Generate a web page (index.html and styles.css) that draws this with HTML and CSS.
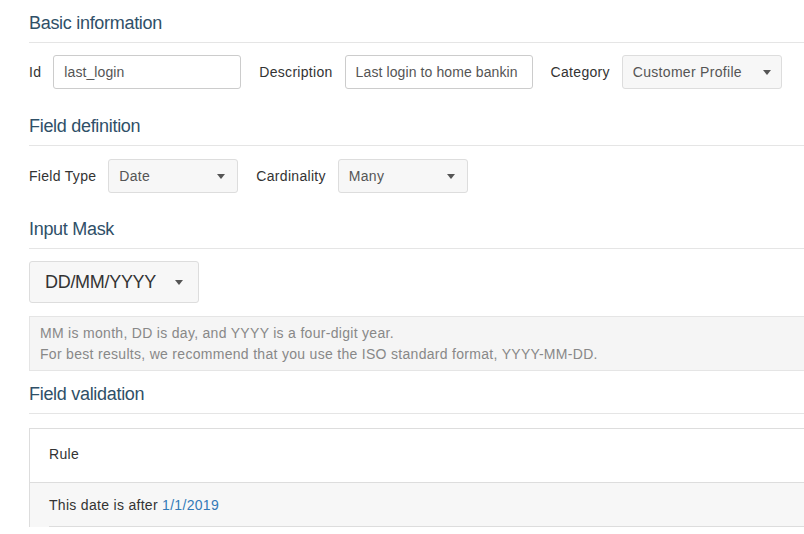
FILE: index.html
```html
<!DOCTYPE html>
<html lang="en">
<head>
    <meta charset="UTF-8">
    <meta name="viewport" content="width=device-width, initial-scale=1.0">
    <title>Field details - last_login</title>
    <link rel="stylesheet" href="styles.css">
</head>
<body>

    <div class="page">

        <h3 class="section-title">Basic information</h3>
        <div class="form-row">
            <div class="field">
                <label>Id</label>
                <div class="text-input id-input">last_login</div>
            </div>
            <div class="field">
                <label>Description</label>
                <div class="text-input desc-input">Last login to home bankin</div>
            </div>
            <div class="field">
                <label>Category</label>
                <div class="dropdown category-dropdown">
                    <span>Customer Profile</span>
                    <span class="caret"></span>
                </div>
            </div>
        </div>

        <h3 class="section-title">Field definition</h3>
        <div class="form-row definition-row">
            <div class="field">
                <label>Field Type</label>
                <div class="dropdown small-dropdown">
                    <span>Date</span>
                    <span class="caret"></span>
                </div>
            </div>
            <div class="field">
                <label>Cardinality</label>
                <div class="dropdown small-dropdown">
                    <span>Many</span>
                    <span class="caret"></span>
                </div>
            </div>
        </div>

        <h3 class="section-title">Input Mask</h3>
        <div class="dropdown mask-dropdown">
            <span>DD/MM/YYYY</span>
            <span class="caret"></span>
        </div>
        <div class="help-box">
            MM is month, DD is day, and YYYY is a four-digit year.<br>
            For best results, we recommend that you use the ISO standard format, YYYY-MM-DD.
        </div>

        <h3 class="section-title">Field validation</h3>
        <div class="rules">
            <div class="rules-head">Rule</div>
            <div class="rules-row">
                <div class="rules-row-inner">This date is after&nbsp;<a href="#">1/1/2019</a></div>
            </div>
        </div>

    </div>

</body>
</html>
```

FILE: styles.css
```css
body {
    margin: 0;
    font-family: "Liberation Sans", Arial, sans-serif;
    font-size: 14px;
    letter-spacing: 0.3px;
    color: #333;
    background-color: #fff;
    overflow: hidden;
}
.page {
    padding: 13px 0 0 29px;
}
.section-title {
    margin: 0 0 12px;
    padding-bottom: 9px;
    font-size: 18px;
    line-height: 20px;
    font-weight: normal;
    letter-spacing: -0.3px;
    color: #2f5068;
    border-bottom: 1px solid #e5e5e5;
}
.form-row {
    display: flex;
    align-items: center;
    gap: 18px;
    margin-bottom: 27px;
}
.definition-row {
    margin-top: 13px;
    margin-bottom: 26px;
}
.field {
    display: flex;
    align-items: center;
}
.field label {
    margin-right: 12px;
}
.text-input {
    box-sizing: border-box;
    height: 34px;
    padding: 0 10px;
    line-height: 32px;
    color: #555;
    letter-spacing: 0.1px;
    border: 1px solid #ccc;
    border-radius: 3px;
    white-space: nowrap;
    overflow: hidden;
}
.id-input {
    width: 188px;
}
.desc-input {
    width: 188px;
}
.dropdown {
    box-sizing: border-box;
    display: flex;
    align-items: center;
    justify-content: space-between;
    height: 34px;
    padding: 0 12px 0 10px;
    color: #555;
    background-color: #f7f7f7;
    border: 1px solid #ddd;
    border-radius: 3px;
}
.category-dropdown {
    width: 160px;
    padding-right: 10px;
}
.small-dropdown {
    width: 130px;
}
.mask-dropdown {
    width: 170px;
    height: 42px;
    padding: 0 15px;
    font-size: 18px;
    letter-spacing: -0.3px;
    color: #333;
}
.caret {
    width: 0;
    height: 0;
    border-top: 5px solid #555;
    border-left: 4.5px solid transparent;
    border-right: 4.5px solid transparent;
}
.help-box {
    margin: 13px 0;
    padding: 6px 10px 5px;
    line-height: 21px;
    color: #888;
    background-color: #f5f5f5;
    border: 1px solid #e5e5e5;
    border-right: none;
}
.rules {
    margin-top: 14px;
    border-top: 1px solid #ddd;
    border-left: 1px solid #ddd;
}
.rules-head {
    display: flex;
    align-items: center;
    height: 54px;
    padding: 0 0 4px 19px;
    box-sizing: border-box;
    border-bottom: 1px solid #ddd;
}
.rules-row {
    padding-left: 19px;
    background-color: #f7f7f7;
}
.rules-row-inner {
    display: flex;
    align-items: center;
    height: 43px;
    border-bottom: 1px solid #ddd;
}
.rules-row-inner a {
    color: #337ab7;
    text-decoration: none;
}
```
